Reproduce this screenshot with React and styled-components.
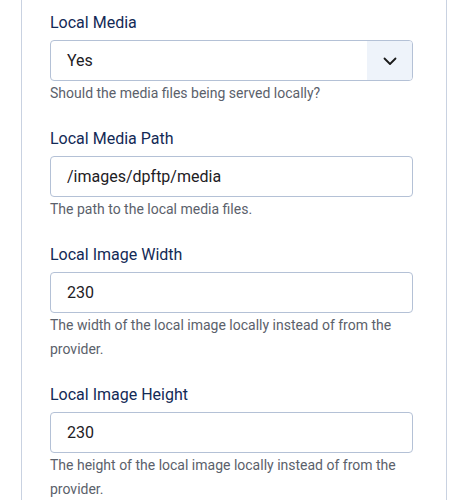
import React from 'react';
import styled, { createGlobalStyle } from 'styled-components';

const GlobalStyle = createGlobalStyle`
  body {
    margin: 0;
    background: #ffffff;
    font-family: Roboto, 'Noto Sans', sans-serif;
  }
`;

const Panel = styled.div`
  margin-left: 21px;
  width: 426px;
  box-sizing: border-box;
  border-left: 1px solid #c9d2e1;
  border-right: 1px solid #c9d2e1;
  padding: 11px 33px 0 28px;
  min-height: 500px;
`;

const Field = styled.div`
  margin-bottom: 22px;
`;

const Label = styled.label`
  display: block;
  font-size: 16px;
  line-height: 24px;
  color: #132a56;
  margin-bottom: 5px;
`;

const Control = styled.div`
  display: flex;
  align-items: stretch;
  height: 41px;
  box-sizing: border-box;
  border: 1px solid #b4c1d6;
  border-radius: 4px;
  overflow: hidden;
  background: #fff;
`;

const Value = styled.div`
  flex: 1;
  display: flex;
  align-items: center;
  padding-left: 16px;
  font-size: 16px;
  color: #1d2024;
`;

const Caret = styled.div`
  width: 45px;
  display: flex;
  align-items: center;
  justify-content: center;
  background: #eef3fa;
  color: #1a1a1a;
`;

const Help = styled.div`
  font-size: 14px;
  line-height: 24px;
  color: #5b616b;
  padding-right: 10px;
`;

const fields = [
  { label: 'Local Media', value: 'Yes', select: true, help: 'Should the media files being served locally?' },
  { label: 'Local Media Path', value: '/images/dpftp/media', help: 'The path to the local media files.' },
  { label: 'Local Image Width', value: '230', help: 'The width of the local image locally instead of from the provider.' },
  { label: 'Local Image Height', value: '230', help: 'The height of the local image locally instead of from the provider.' },
];

const App = () => (
  <>
    <GlobalStyle />
    <Panel>
      {fields.map((f) => (
        <Field key={f.label}>
          <Label>{f.label}</Label>
          <Control>
            <Value>{f.value}</Value>
            {f.select && (
              <Caret>
                <svg width="16" height="16" viewBox="0 0 16 16" fill="none">
                  <path d="M2.5 5.5 L8 11 L13.5 5.5" stroke="currentColor" strokeWidth="1.8" strokeLinecap="round" strokeLinejoin="round" />
                </svg>
              </Caret>
            )}
          </Control>
          <Help>{f.help}</Help>
        </Field>
      ))}
    </Panel>
  </>
);

export default App;
